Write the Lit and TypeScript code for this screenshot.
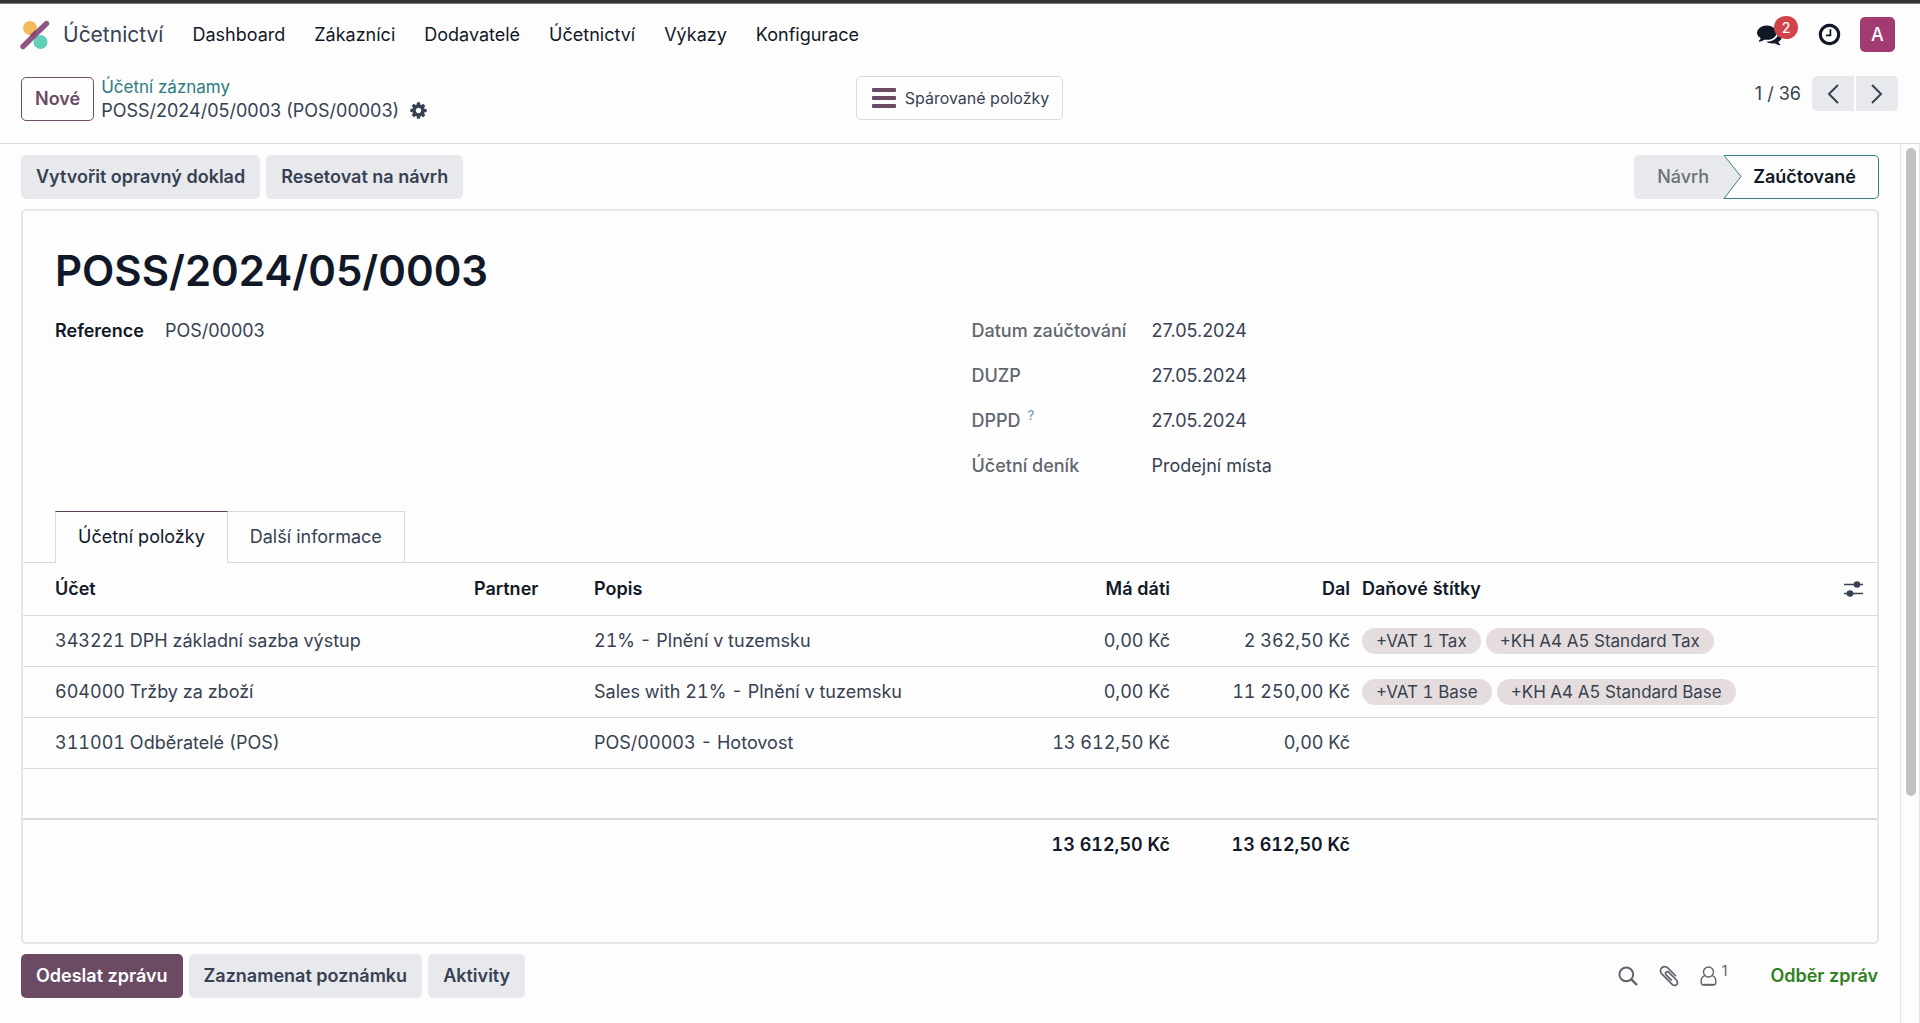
import { LitElement, html, css, svg } from "lit";
import { customElement } from "lit/decorators.js";

interface EntryLine {
  account: string;
  label: string;
  debit: string;
  credit: string;
  tags: string[];
}

const MENU = ["Dashboard", "Zákazníci", "Dodavatelé", "Účetnictví", "Výkazy", "Konfigurace"];

const DATES = [
  { label: "Datum zaúčtování", value: "27.05.2024", help: false },
  { label: "DUZP", value: "27.05.2024", help: false },
  { label: "DPPD", value: "27.05.2024", help: true },
  { label: "Účetní deník", value: "Prodejní místa", help: false },
];

const LINES: EntryLine[] = [
  {
    account: "343221 DPH základní sazba výstup",
    label: "21% - Plnění v tuzemsku",
    debit: "0,00 Kč",
    credit: "2 362,50 Kč",
    tags: ["+VAT 1 Tax", "+KH A4 A5 Standard Tax"],
  },
  {
    account: "604000 Tržby za zboží",
    label: "Sales with 21% - Plnění v tuzemsku",
    debit: "0,00 Kč",
    credit: "11 250,00 Kč",
    tags: ["+VAT 1 Base", "+KH A4 A5 Standard Base"],
  },
  {
    account: "311001 Odběratelé (POS)",
    label: "POS/00003 - Hotovost",
    debit: "13 612,50 Kč",
    credit: "0,00 Kč",
    tags: [],
  },
];

const PATHS = {
  comments:
    "M1408 768q0 139-94 257t-256.500 186.500-353.500 68.500q-86 0-176-16-124 88-278 128-36 9-86 16h-3q-11 0-20.500-8t-11.500-21q-1-3-1-6.500t.5-6.500 2-6l2.500-5 3.500-5.500 4-5 4.500-5 4-4.500q5-6 23-25t26-29.500 22.500-29 25-38.500 20.500-44q-124-72-195-177t-71-224q0-139 94-257t256.500-186.500 353.500-68.500 353.500 68.500 256.500 186.500 94 257zm384 256q0 120-71 224.500t-195 176.500q10 24 20.500 44t25 38.500 22.500 29 26 29.500 23 25q1 1 4 4.500t4.500 5 4 5 3.500 5.500l2.500 5 2 6 .5 6.500-1 6.500q-3 14-13 22t-22 7q-50-7-86-16-154-40-278-128-90 16-176 16-271 0-472-132 58 4 88 4 161 0 309-45t264-129q125-92 192-212t67-254q0-77-23-152 129 71 204 178t75 230z",
  clock:
    "M1024 544v448q0 14-9 23t-23 9h-320q-14 0-23-9t-9-23v-64q0-14 9-23t23-9h224v-352q0-14 9-23t23-9h64q14 0 23 9t9 23zm416 352q0-148-73-273t-198-198-273-73-273 73-198 198-73 273 73 273 198 198 273 73 273-73 198-198 73-273zm224 0q0 209-103 385.500t-279.500 279.500-385.500 103-385.500-103-279.500-279.500-103-385.500 103-385.500 279.500-279.500 385.500-103 385.500 103 279.500 279.500 103 385.500z",
  cog: "M1152 896q0-106-75-181t-181-75-181 75-75 181 75 181 181 75 181-75 75-181zm512-109v222q0 12-8 23t-20 13l-185 28q-19 54-39 91 35 50 107 138 10 12 10 25t-9 23q-27 37-99 108t-94 71q-12 0-26-9l-138-108q-44 23-91 38-16 136-29 186-7 28-36 28h-222q-14 0-24.500-8.500t-11.500-21.500l-28-184q-49-16-90-37l-141 107q-10 9-25 9-14 0-25-11-126-114-165-168-7-10-7-23 0-12 8-23 15-21 51-66.500t54-70.500q-27-50-41-99l-183-27q-13-2-21-12.500t-8-23.500v-222q0-12 8-23t19-13l186-28q14-46 39-92-40-57-107-138-10-12-10-24 0-10 9-23 26-36 98.500-107.500t94.500-71.500q13 0 26 10l138 107q44-23 91-38 16-136 29-186 7-28 36-28h222q14 0 24.500 8.500t11.500 21.500l28 184q49 16 90 37l142-107q9-9 24-9 13 0 25 10 129 119 165 170 7 8 7 22 0 12-8 23-15 21-51 66.500t-54 70.500q26 50 41 98l183 28q13 2 21 12.500t8 23.500z",
  clip: "M1596 1385q0 117-79 196t-196 79q-135 0-235-100l-777-776q-113-115-113-271 0-159 110-270t269-111q158 0 273 113l605 606q10 10 10 22 0 16-30.500 46.500t-46.500 30.500q-13 0-23-10l-606-607q-79-77-181-77-106 0-179 75t-73 181q0 105 76 181l776 777q63 63 145 63 64 0 106-42t42-106q0-82-63-145l-581-581q-26-24-60-24-29 0-48 19t-19 48q0 32 25 59l410 410q10 10 10 22 0 16-31 47t-47 31q-12 0-22-10l-410-410q-63-61-63-149 0-82 57-139t139-57q88 0 149 63l581 581q100 98 100 235z",
};

const glyph = (d: string, size: number) =>
  html`<svg width=${size} height=${size} viewBox="0 0 1792 1792" fill="currentColor" aria-hidden="true">
    ${svg`<path d=${d}></path>`}
  </svg>`;

@customElement("app-root")
export class AppRoot extends LitElement {
  static styles = css`
    :host {
      display: flex;
      flex-direction: column;
      min-height: 100vh;
      box-sizing: border-box;
      border-top: 3px solid #333436;
      background: #fdfdfd;
      color: #374151;
      font: 400 18px/24px Inter, "Liberation Sans", sans-serif;
    }
    * {
      box-sizing: border-box;
    }
    button {
      font: inherit;
      color: inherit;
      margin: 0;
      padding: 0;
      border: 0;
      background: none;
      cursor: pointer;
    }
    svg {
      display: block;
      flex: none;
    }
    a {
      text-decoration: none;
    }

    .navbar {
      display: flex;
      align-items: center;
      height: 62px;
      padding: 0 25px 0 20px;
      border-top: 1px solid #75777a;
      color: #111827;
    }
    .brand {
      display: flex;
      align-items: center;
      gap: 13px;
      margin-right: 14px;
      color: #374151;
      font-size: 21px;
    }
    .menu {
      display: flex;
      flex: 1;
    }
    .menu a {
      padding: 0 14px 0 15px;
      color: inherit;
    }
    .systray {
      display: flex;
      align-items: center;
    }
    .chat {
      position: relative;
      margin-right: 35px;
    }
    .badge {
      position: absolute;
      left: 17px;
      top: -6px;
      min-width: 24px;
      border-radius: 12px;
      background: #d04348;
      color: #fff;
      font-size: 14px;
      font-weight: 500;
      line-height: 23px;
      text-align: center;
    }
    .clock {
      margin-right: 18px;
    }
    .avatar {
      width: 35px;
      height: 35px;
      border-radius: 5px;
      background: #a23b72;
      color: #fff;
      font-weight: 500;
    }

    .panel {
      display: grid;
      grid-template-columns: 1fr auto 1fr;
      align-items: start;
      padding: 11px 22px 21px 21px;
      border-bottom: 1px solid #d8dadd;
    }
    .where {
      display: flex;
      align-items: center;
      gap: 7px;
    }
    .btn {
      height: 44px;
      padding: 0 15px;
      border-radius: 5px;
      background: #e7e9ed;
      font-weight: 600;
      white-space: nowrap;
    }
    .btn.outline {
      padding: 0 13px;
      border: 1px solid #714b67;
      background: none;
      color: #6b4a63;
    }
    .btn.primary {
      background: #6b4a63;
      color: #fff;
    }
    .crumbs {
      line-height: 23px;
    }
    .crumbs a {
      display: block;
      color: #2b7b80;
      font-size: 17px;
    }
    .crumbs .current {
      display: flex;
      align-items: center;
      gap: 10px;
    }
    .stat {
      display: flex;
      align-items: center;
      gap: 9px;
      height: 44px;
      padding: 0 13px 0 15px;
      border: 1px solid #d8dadd;
      border-radius: 5px;
      font-size: 16px;
    }
    .bars {
      color: #6b4a63;
    }
    .pager {
      display: flex;
      align-items: center;
      justify-self: end;
      gap: 2px;
    }
    .pager .count {
      margin-right: 9px;
    }
    .pager button {
      display: grid;
      place-items: center;
      width: 42px;
      height: 35px;
      background: #e7e9ed;
    }
    .pager .prev {
      border-radius: 5px 0 0 5px;
    }
    .pager .next {
      border-radius: 0 5px 5px 0;
    }

    .body {
      display: flex;
      flex: 1;
    }
    .content {
      flex: 1;
      min-width: 0;
      padding: 11px 21px 24px;
    }
    .gutter {
      width: 20px;
      padding: 4px 3px 0 5px;
      border: solid #e4e6e9;
      border-width: 0 1px;
    }
    .thumb {
      width: 10px;
      height: 74%;
      border-radius: 5px;
      background: #c1c1c3;
    }
    .bar {
      display: flex;
      align-items: center;
      gap: 6px;
    }
    .status {
      display: flex;
      margin-left: auto;
    }
    .step {
      height: 44px;
      font-weight: 500;
    }
    .step.draft {
      padding: 0 14px 0 23px;
      border-radius: 5px 0 0 5px;
      background: #e7e9ed;
      color: #6c6f76;
    }
    .step.posted {
      display: flex;
      align-items: center;
      color: #111827;
      font-weight: 600;
    }
    .step .text {
      display: flex;
      align-items: center;
      height: 44px;
      padding: 0 22px 0 11px;
      border: solid #35807f;
      border-width: 1px 1px 1px 0;
      border-radius: 0 5px 5px 0;
    }

    .sheet {
      min-height: 735px;
      margin: 10px 0;
      border: 2px solid #e5e6ea;
      border-radius: 5px;
    }
    .head {
      padding: 33px 32px 0;
    }
    h1 {
      margin: 0 0 21px;
      color: #111827;
      font-size: 42px;
      font-weight: 600;
      line-height: 54px;
    }
    .groups {
      display: grid;
      grid-template-columns: 1fr 1fr;
      gap: 43px;
      min-height: 192px;
    }
    .field {
      display: flex;
      gap: 21px;
      height: 24px;
    }
    .field .name {
      color: #111827;
      font-weight: 600;
    }
    .dates {
      display: grid;
      grid-template-columns: 160px 1fr;
      align-content: start;
      gap: 21px 20px;
      margin: 0;
    }
    .dates dt {
      color: #62666f;
      font-weight: 500;
      white-space: nowrap;
    }
    .dates dd {
      margin: 0;
    }
    .dates sup {
      margin-left: 2px;
      color: #6fa3b3;
      font-size: 13px;
      line-height: 1;
    }

    .tabs {
      display: flex;
      padding: 0 32px;
      border-bottom: 1px solid #d8dadd;
    }
    .tab {
      height: 51px;
      padding: 0 22px;
      border: 1px solid #d8dadd;
      border-left: 0;
      border-bottom: 0;
    }
    .tab.active {
      height: 52px;
      margin-bottom: -1px;
      padding-bottom: 1px;
      border-left: 1px solid #d8dadd;
      border-top-color: #5f4059;
      background: #fdfdfd;
      color: #111827;
    }

    .lines {
      width: 100%;
      border-collapse: collapse;
      table-layout: fixed;
      font-feature-settings: "tnum";
    }
    .c-account {
      width: 445px;
    }
    .c-partner {
      width: 120px;
    }
    .c-label {
      width: 408px;
    }
    .c-amount {
      width: 180px;
    }
    .c-options {
      width: 50px;
    }
    .lines th,
    .lines td {
      height: 51px;
      padding: 0 6px;
      text-align: left;
      white-space: nowrap;
    }
    .lines thead th {
      height: 52px;
      color: #111827;
      font-weight: 600;
    }
    .lines tr > :first-child {
      padding-left: 32px;
    }
    .lines .num {
      text-align: right;
    }
    .lines .options {
      padding-right: 13px;
    }
    .options button {
      display: block;
      margin-left: auto;
      color: #374151;
    }
    .lines tbody tr,
    .lines thead tr {
      border-bottom: 1px solid #d8dadd;
    }
    .lines tbody tr:last-child {
      border-bottom: 2px solid #d8dadd;
    }
    .lines tfoot td {
      height: 50px;
      color: #111827;
      font-weight: 600;
    }
    .tags {
      display: flex;
      gap: 5px;
    }
    .tag {
      padding: 0 14px;
      border-radius: 13px;
      background: #e5dddd;
      font-size: 17px;
      line-height: 26px;
    }

    .tools {
      display: flex;
      align-items: center;
      gap: 19px;
      margin-left: auto;
      padding-right: 1px;
      color: #5f636c;
    }
    .followers {
      display: flex;
      gap: 5px;
    }
    .followers .n {
      font-size: 14px;
      line-height: 10px;
    }
    .follow {
      margin-left: 24px;
      color: #2f8021;
      font-weight: 600;
    }
  `;

  render() {
    return html`
      <header class="navbar">
        <div class="brand">
          <svg width="30" height="30" viewBox="0 0 30 30" aria-hidden="true">
            <circle cx="10" cy="8" r="7" fill="#f2bc5b"></circle>
            <circle cx="20.500" cy="22" r="7" fill="#62d0b9"></circle>
            <path d="M3 26.500 26.500 3.500" stroke="#8f5482" stroke-width="5.400" stroke-linecap="round"></path>
            <path d="M9.500 15.100 15.500 9.400 16.500 13 12 17.500z" fill="#7c2f5c" opacity=".5"></path>
          </svg>
          <span>Účetnictví</span>
        </div>
        <nav class="menu">${MENU.map((m) => html`<a href="#">${m}</a>`)}</nav>
        <div class="systray">
          <button class="chat" aria-label="Zprávy">${glyph(PATHS.comments, 25)}<span class="badge">2</span></button>
          <button class="clock" aria-label="Aktivity">${glyph(PATHS.clock, 25)}</button>
          <button class="avatar">A</button>
        </div>
      </header>

      <section class="panel">
        <div class="where">
          <button class="btn outline">Nové</button>
          <div class="crumbs">
            <a href="#">Účetní záznamy</a>
            <div class="current">
              <span>POSS/2024/05/0003 (POS/00003)</span>
              <button aria-label="Akce">${glyph(PATHS.cog, 19)}</button>
            </div>
          </div>
        </div>
        <button class="stat">
          <svg class="bars" width="24" height="20" viewBox="0 0 24 20" fill="currentColor" aria-hidden="true">
            <rect width="24" height="4" rx="1"></rect>
            <rect y="8" width="24" height="4" rx="1"></rect>
            <rect y="16" width="24" height="4" rx="1"></rect>
          </svg>
          <span>Spárované položky</span>
        </button>
        <div class="pager">
          <span class="count">1 / 36</span>
          <button class="prev" aria-label="Předchozí">
            <svg width="12" height="20" viewBox="0 0 12 20" fill="none" stroke="currentColor" stroke-width="2">
              <path d="M11 1 2 10l9 9"></path>
            </svg>
          </button>
          <button class="next" aria-label="Další">
            <svg width="12" height="20" viewBox="0 0 12 20" fill="none" stroke="currentColor" stroke-width="2">
              <path d="M1 1l9 9-9 9"></path>
            </svg>
          </button>
        </div>
      </section>

      <div class="body">
        <main class="content">
          <div class="bar">
            <button class="btn">Vytvořit opravný doklad</button>
            <button class="btn">Resetovat na návrh</button>
            <div class="status">
              <button class="step draft">Návrh</button>
              <button class="step posted">
                <svg width="19" height="44" viewBox="0 0 19 44" aria-hidden="true">
                  <path d="M0 0 18 21.500 0 44z" fill="#e7e9ed"></path>
                  <path d="M19 .5H1L18 21.500 1 43.500H19" fill="none" stroke="#35807f"></path>
                </svg>
                <span class="text">Zaúčtované</span>
              </button>
            </div>
          </div>

          <article class="sheet">
            <div class="head">
              <h1>POSS/2024/05/0003</h1>
              <div class="groups">
                <div class="field"><span class="name">Reference</span><span>POS/00003</span></div>
                <dl class="dates">
                  ${DATES.map(
                    (d) => html`<dt>${d.label}${d.help ? html` <sup>?</sup>` : ""}</dt>
                      <dd>${d.value}</dd>`,
                  )}
                </dl>
              </div>
            </div>

            <div class="tabs" role="tablist">
              <button class="tab active" role="tab" aria-selected="true">Účetní položky</button>
              <button class="tab" role="tab" aria-selected="false">Další informace</button>
            </div>

            <table class="lines">
              <colgroup>
                <col class="c-account" />
                <col class="c-partner" />
                <col class="c-label" />
                <col class="c-amount" />
                <col class="c-amount" />
                <col />
                <col class="c-options" />
              </colgroup>
              <thead>
                <tr>
                  <th>Účet</th>
                  <th>Partner</th>
                  <th>Popis</th>
                  <th class="num">Má dáti</th>
                  <th class="num">Dal</th>
                  <th>Daňové štítky</th>
                  <th class="options">
                    <button aria-label="Volitelné sloupce">
                      <svg width="20" height="18" viewBox="0 0 20 18" aria-hidden="true">
                        <path d="M0 4.500H19M0 13.500H19" stroke="currentColor" stroke-width="1.500"></path>
                        <circle cx="13" cy="4.500" r="3.300" fill="currentColor"></circle>
                        <circle cx="6" cy="13.500" r="3.300" fill="currentColor"></circle>
                      </svg>
                    </button>
                  </th>
                </tr>
              </thead>
              <tbody>
                ${LINES.map(
                  (l) => html`<tr>
                    <td>${l.account}</td>
                    <td></td>
                    <td>${l.label}</td>
                    <td class="num">${l.debit}</td>
                    <td class="num">${l.credit}</td>
                    <td colspan="2">
                      <div class="tags">${l.tags.map((t) => html`<span class="tag">${t}</span>`)}</div>
                    </td>
                  </tr>`,
                )}
                <tr>
                  <td colspan="7"></td>
                </tr>
              </tbody>
              <tfoot>
                <tr>
                  <td colspan="3"></td>
                  <td class="num">13 612,50 Kč</td>
                  <td class="num">13 612,50 Kč</td>
                  <td colspan="2"></td>
                </tr>
              </tfoot>
            </table>
          </article>

          <div class="bar">
            <button class="btn primary">Odeslat zprávu</button>
            <button class="btn">Zaznamenat poznámku</button>
            <button class="btn">Aktivity</button>
            <div class="tools">
              <button aria-label="Hledat">
                <svg width="20" height="20" viewBox="0 0 20 20" fill="none" stroke="currentColor" aria-hidden="true">
                  <circle cx="8.300" cy="8.300" r="6.900" stroke-width="2"></circle>
                  <path d="M13.300 13.300 19 19" stroke-width="2.400"></path>
                </svg>
              </button>
              <button aria-label="Přílohy">${glyph(PATHS.clip, 24)}</button>
              <button class="followers" aria-label="Sledující">
                <svg width="17" height="20" viewBox="0 0 17 20" fill="none" stroke="currentColor" aria-hidden="true">
                  <circle cx="8.500" cy="6" r="5" stroke-width="1.400"></circle>
                  <path
                    d="M4.700 9.600C2 10.500 1.100 13 1.100 15.800c0 2 1 3.200 2.700 3.200h9.400c1.700 0 2.700-1.200 2.700-3.200 0-2.800-.9-5.300-3.600-6.200"
                    stroke-width="1.400"
                  ></path>
                  <path d="M3.500 18.600h10" stroke-width="1.600"></path>
                </svg>
                <span class="n">1</span>
              </button>
              <button class="follow">Odběr zpráv</button>
            </div>
          </div>
        </main>
        <div class="gutter"><div class="thumb"></div></div>
      </div>
    `;
  }
}
